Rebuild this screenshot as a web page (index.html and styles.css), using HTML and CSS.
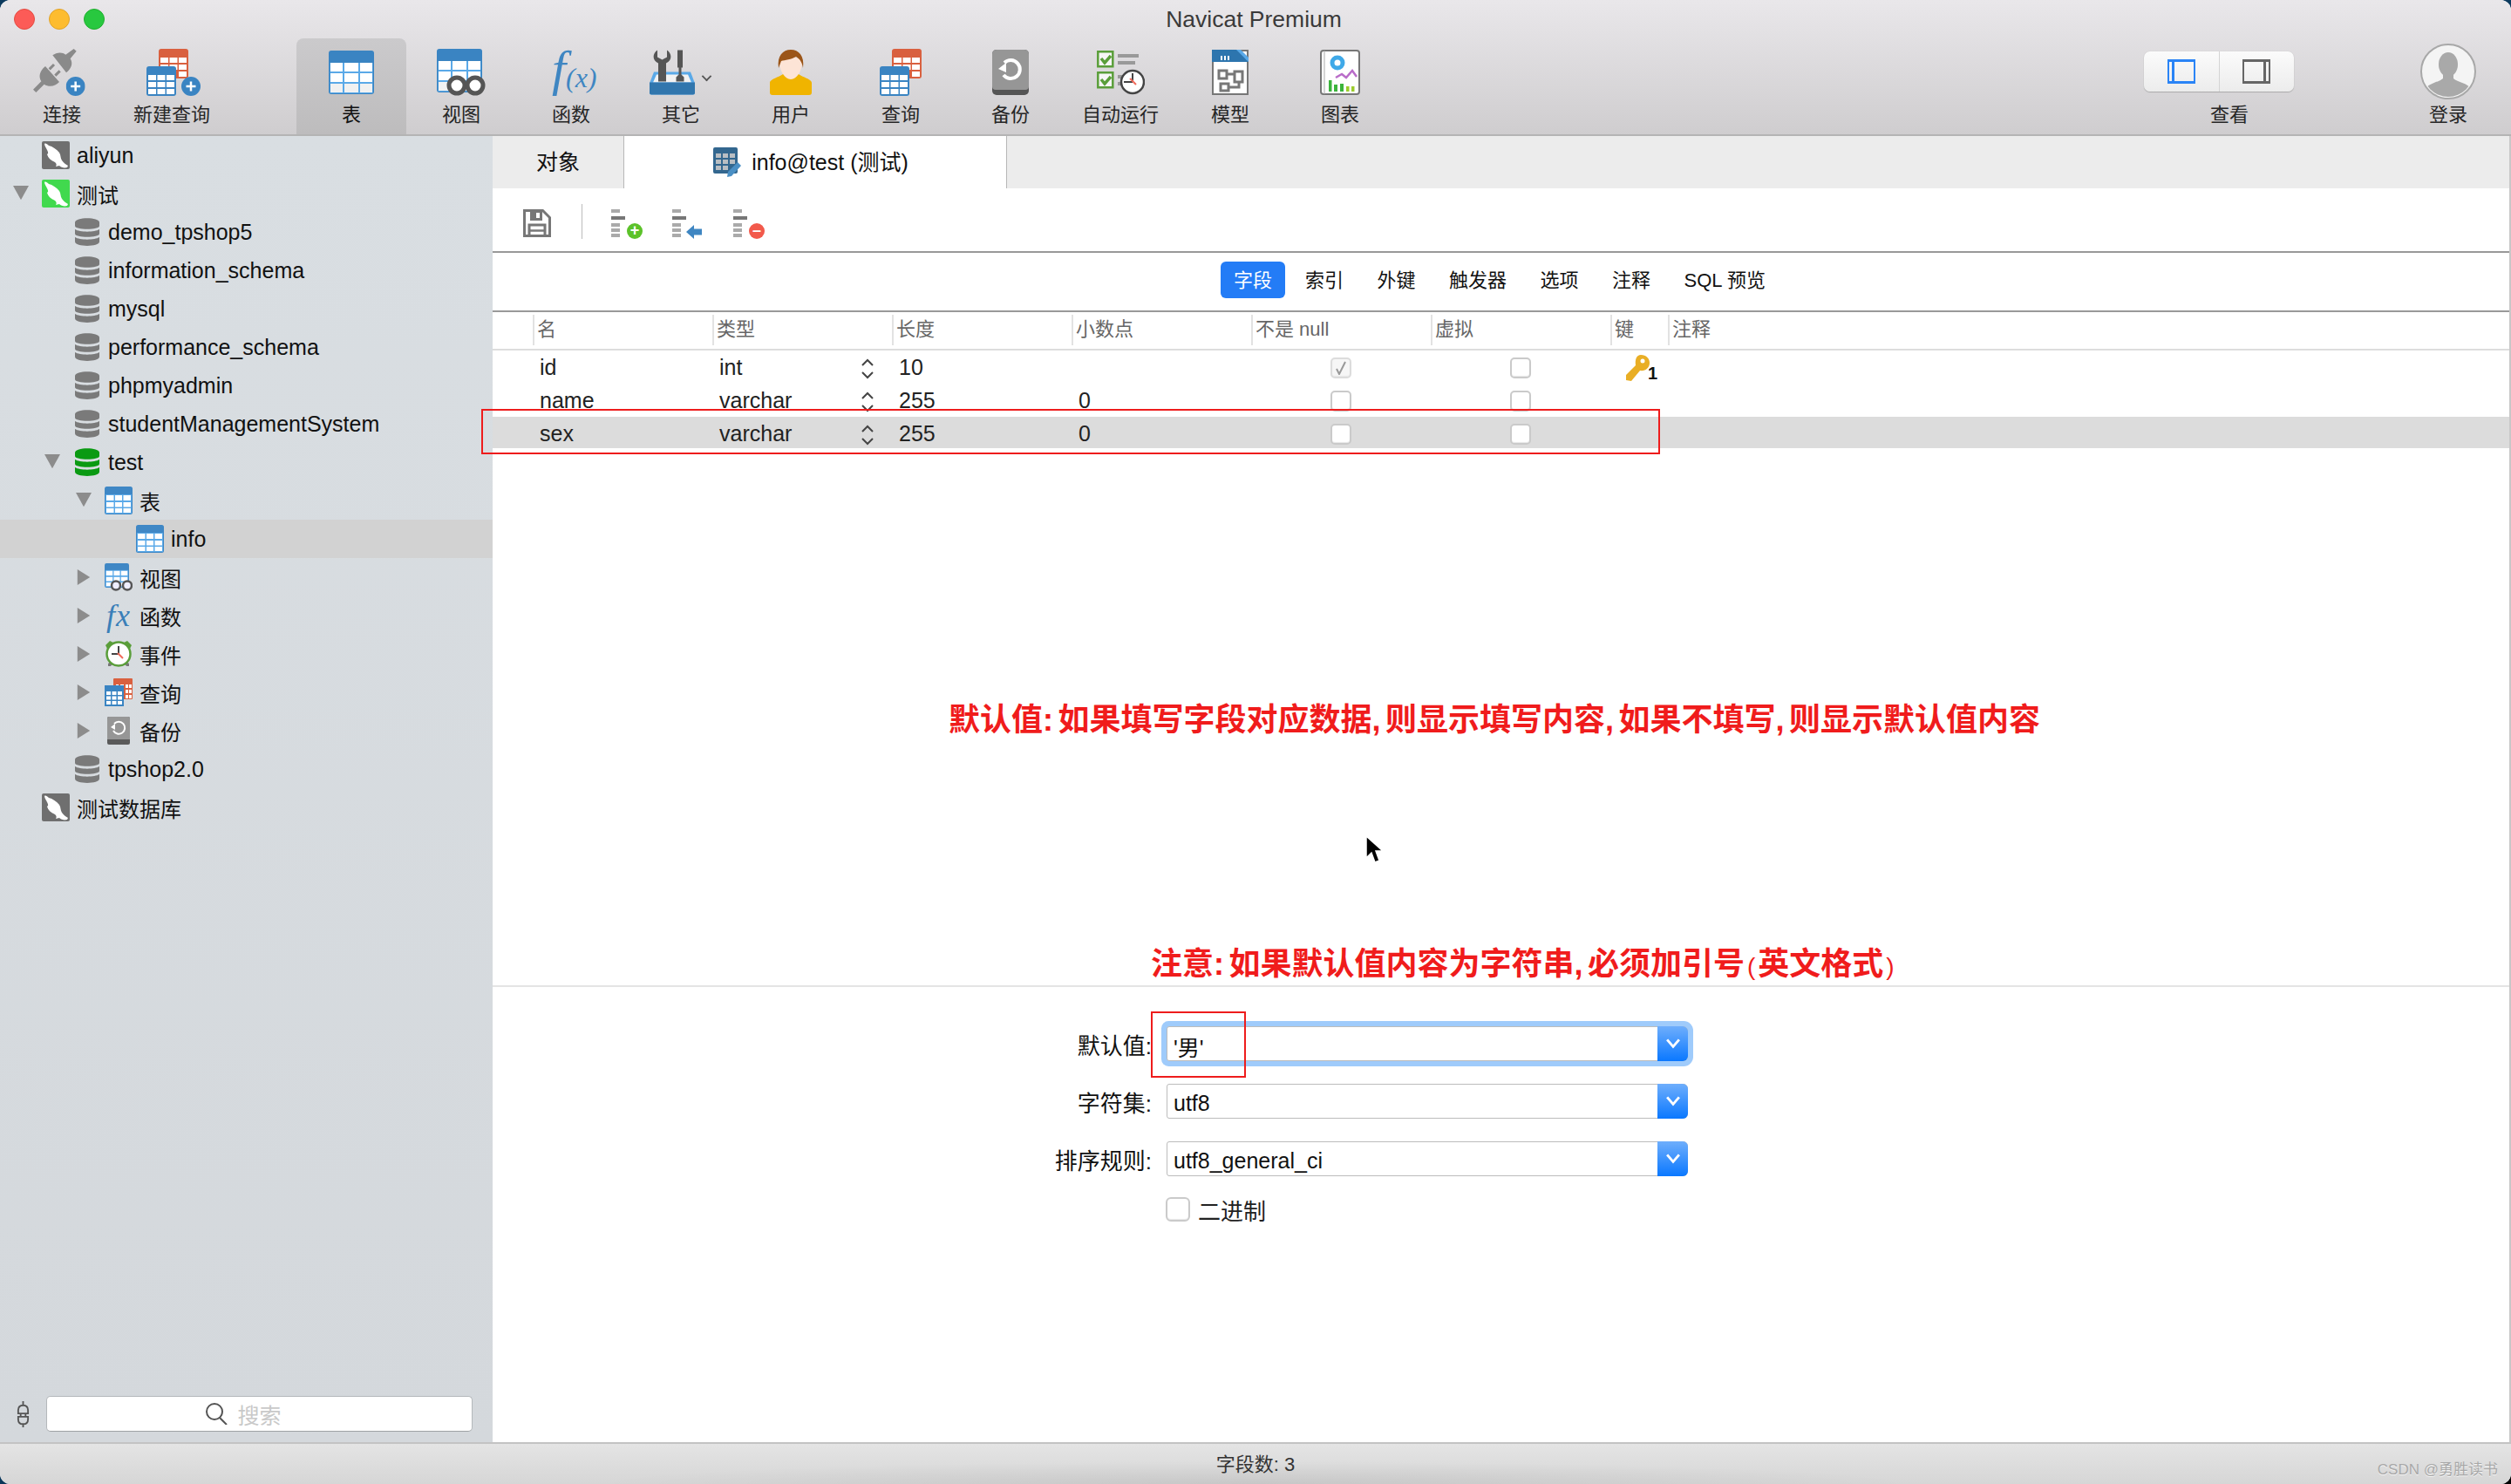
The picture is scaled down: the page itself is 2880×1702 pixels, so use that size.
FILE: index.html
```html
<!DOCTYPE html>
<html lang="zh-CN">
<head>
<meta charset="utf-8">
<title>Navicat Premium</title>
<link rel="stylesheet" href="styles.css">
</head>
<body>
<svg class="sprite" xmlns="http://www.w3.org/2000/svg">
  <symbol id="i-table" viewBox="0 0 52 50">
    <rect width="52" height="50" rx="3" fill="#3a84c2"/>
    <rect x="1.5" y="14" width="49" height="35" fill="#5aa9e8"/>
    <path fill="#fff" d="M2 14h14v10H2zM18 14h16v10H18zM36 14h14v10H36zM2 26h14v10H2zM18 26h16v10H18zM36 26h14v10H36z"/>
    <path fill="#f1f1f1" d="M2 38h14v10H2zM18 38h16v10H18zM36 38h14v10H36z"/>
  </symbol>
  <symbol id="i-tbl" viewBox="0 0 32 32">
    <rect width="32" height="32" rx="2.5" fill="#3f87c5"/>
    <rect x="1" y="9" width="30" height="22" fill="#5aa9e8"/>
    <path fill="#fff" d="M2 10h8.500v6H2zM12 10h8v6h-8zM21.500 10H30v6h-8.500zM2 18h8.500v5.500H2zM12 18h8v5.500h-8zM21.500 18H30v5.500h-8.500zM2 25h8.500v5H2zM12 25h8v5h-8zM21.500 25H30v5h-8.500z"/>
  </symbol>
  <symbol id="i-q" viewBox="0 0 48 54">
    <rect x="14" width="34" height="34" rx="3" fill="#d9603f"/>
    <path fill="#fff" d="M16 10h9v6h-9zM26.500 10h9v6h-9zM37 10h9v6h-9zM16 18h9v6h-9zM26.500 18h9v6h-9zM37 18h9v6h-9zM37 26h9v6h-9z"/>
    <rect y="20" width="34" height="34" rx="3" fill="#3a84c2"/>
    <path fill="#fff" d="M2 30h9v6H2zM12.500 30h9v6h-9zM23 30h9v6h-9zM2 38h9v6H2zM12.500 38h9v6h-9zM23 38h9v6h-9zM2 46h9v6H2zM12.500 46h9v6h-9zM23 46h9v6h-9z"/>
  </symbol>
  <symbol id="i-plus" viewBox="0 0 22 22">
    <circle cx="11" cy="11" r="11" fill="#3a84c2"/>
    <path d="M11 5.500v11M5.500 11h11" stroke="#fff" stroke-width="2.500"/>
  </symbol>
  <symbol id="i-plug" viewBox="0 0 180 162">
    <path fill="#8a8a8a" d="M67 22C80 12 100 10 112 20L140 0l9 8-21 26c10 16 4 34-14 48z"/>
    <path fill="#8a8a8a" d="M42 60l48 54c-14 16-36 18-52 8L10 150 0 140l28-28C18 96 22 76 42 60z"/>
    <path stroke="#8a8a8a" stroke-width="9" d="M56 70l16-16M76 92l16-16"/>
    <use href="#i-plus" x="113" y="96" width="66" height="66"/>
  </symbol>
  <symbol id="i-view" viewBox="0 0 56 54">
    <use href="#i-table" width="52" height="50"/>
    <circle cx="23" cy="42" r="9" fill="#fff" stroke="#555" stroke-width="5"/>
    <circle cx="44" cy="42" r="9" fill="#fff" stroke="#555" stroke-width="5"/>
    <path d="M31 40h5" stroke="#555" stroke-width="4"/>
  </symbol>
  <symbol id="i-tools" viewBox="0 0 52 51">
    <path fill="#5aa9e8" d="M5 25h42l5 13v11q0 2-2 2H2q-2 0-2-2V38z"/>
    <path fill="#f2f2f2" d="M8 28h36l4 9H4z"/>
    <path fill="#3176ad" d="M0 37h52v12q0 2-2 2H2q-2 0-2-2z"/>
    <path fill="#555" d="M9 0C3 4 3 12 10 15v21h9V15c7-3 7-11 1-15v8l-5.500 3L9 8z"/>
    <path fill="#555" d="M32 0h6v20h-1.500v8l3 3v5h-9v-5l3-3v-8H32z"/>
  </symbol>
  <symbol id="i-user" viewBox="0 0 48 52">
    <path fill="#f0b400" d="M0 49V38c0-5 14-7 17-12h14c3 5 17 7 17 12v11q0 3-3 3H3q-3 0-3-3z"/>
    <path fill="#fde4d6" d="M11 14c0-7 26-7 26 0 0 10-6 20-13 20S11 24 11 14z"/>
    <path fill="#9b5518" d="M10 21C8 7 15 0 24 0s16 7 14 21c-1-6-3-10-8-13-5 3-13 4-17 5z"/>
  </symbol>
  <symbol id="i-backup" viewBox="0 0 42 52">
    <rect width="42" height="52" rx="5" fill="#555"/>
    <path fill="#969696" d="M5 0h32q5 0 5 5v37q0 4-4 4H4q-4 0-4-4V5q0-5 5-5z"/>
    <path d="M14 15a10.500 10.500 0 1 1-1 14" fill="none" stroke="#fff" stroke-width="4"/>
    <path fill="#fff" d="M7 22l9-7v11z"/>
  </symbol>
  <symbol id="i-auto" viewBox="0 0 55 50">
    <path fill="#f6f6f6" stroke="#5a9e3a" stroke-width="2.500" d="M1.300 1.300h17v17h-17zM1.300 25.300h17v17h-17z"/>
    <path fill="none" stroke="#5a9e3a" stroke-width="3.500" d="M5 9l4 5 7-8M5 33l4 5 7-8"/>
    <path fill="#999" d="M24 4h24v4H24zM24 12h20v4H24zM24 28h6v4h-6zM24 36h6v4h-6z"/>
    <circle cx="41" cy="36" r="13" fill="#fff" stroke="#444" stroke-width="2.500"/>
    <path d="M41 36V26M41 36H31" stroke="#444" stroke-width="2"/>
    <path d="M38 32l7 7" stroke="#f06a5a" stroke-width="2"/>
  </symbol>
  <symbol id="i-model" viewBox="0 0 42 52">
    <path fill="#fff" stroke="#777" stroke-width="2" d="M1 1h40v50H1z"/>
    <path fill="#2d75ae" d="M0 0h30l12 14H0z"/>
    <path fill="#5aa9e8" d="M28 0l14 14V9l-9-9z"/>
    <path fill="#fff" d="M10 7h2v5h-2zM14 7h2v5h-2zM18 7h2v5h-2z"/>
    <path fill="none" stroke="#777" stroke-width="3" d="M8 24h9v9H8zM26 25h9v12h-9zM10 39h9v8h-9zM17 28h9M31 37v6H19"/>
  </symbol>
  <symbol id="i-chart" viewBox="0 0 46 52">
    <rect x="1" y="1" width="44" height="50" rx="3" fill="#fff" stroke="#777" stroke-width="2"/>
    <path d="M5 1v50" stroke="#aaa"/>
    <circle cx="20" cy="15" r="6" fill="none" stroke="#3fa9e8" stroke-width="5"/>
    <path d="M18 32l7-4 5 4 7-8 5 7" fill="none" stroke="#b96cc9" stroke-width="2.500"/>
    <path fill="#3cb43c" d="M10 35h3.500v13H10zM16 40h4v8h-4zM23 39h4v9h-4z"/>
    <path fill="#9ccc2c" d="M30 42h3.500v6H30zM36 42h3.500v6H36z"/>
  </symbol>
  <symbol id="i-conn" viewBox="0 0 32 32">
    <rect width="32" height="32" rx="2"/>
    <path fill="#fff" d="M3 3c1-1 3 0 5 2 4 1 9 4 12 8 2 3 1 6 3 9 2 3 5 5 7 6l-1 2c-3 1-7 0-9-2l-4 1c1-2 1-3-1-5-5-2-8-5-9-9 2-1 1-3 0-5C5 8 3 5 3 3z"/>
  </symbol>
  <symbol id="i-db" viewBox="0 0 28 32">
    <path d="M0 5c0-6.500 28-6.500 28 0v4c0 5-28 5-28 0z"/>
    <path d="M0 13c5 3.500 23 3.500 28 0v5c0 5-28 5-28 0z"/>
    <path d="M0 22c5 3.500 23 3.500 28 0v5c0 6.500-28 6.500-28 0z"/>
  </symbol>
  <symbol id="i-tview" viewBox="0 0 32 32">
    <use href="#i-tbl" width="28" height="28"/>
    <circle cx="13" cy="25.500" r="5" fill="#eef" stroke="#555" stroke-width="2.500"/>
    <circle cx="26" cy="25.500" r="5" fill="#eef" stroke="#555" stroke-width="2.500"/>
  </symbol>
  <symbol id="i-clock" viewBox="0 0 32 32">
    <path fill="#5a9e3a" d="M1 6l5-5 4 2-7 7zM31 6l-5-5-4 2 7 7z"/>
    <path fill="#777" d="M4 27l3-2 2 2-2 3H4zM28 27l-3-2-2 2 2 3h3z"/>
    <circle cx="16" cy="16" r="13.500" fill="#fff" stroke="#5a9e3a" stroke-width="2.500"/>
    <path d="M16 7v9H8" stroke="#444" stroke-width="2" fill="none"/>
    <path d="M15 15l6 6" stroke="#f06a5a" stroke-width="2"/>
  </symbol>
  <symbol id="i-tq" viewBox="0 0 32 32">
    <rect x="10" width="22" height="24" rx="1" fill="#d9603f"/>
    <path fill="#fff" d="M24 7h3v4h-3zM28 7h3v4h-3zM24 13h3v4h-3zM28 13h3v4h-3zM24 19h3v4h-3zM28 19h3v4h-3zM13 7h3v1h-3zM18 7h4v1h-4z"/>
    <rect y="8" width="22" height="24" fill="#3a84c2"/>
    <path fill="#fff" d="M2 15h5v4H2zM8.500 15h5v4h-5zM15 15h5v4h-5zM2 20.500h5v4H2zM8.500 20.500h5v4h-5zM15 20.500h5v4h-5zM2 26h5v4H2zM8.500 26h5v4h-5zM15 26h5v4h-5z"/>
  </symbol>
  <symbol id="i-tb" viewBox="0 0 32 32">
    <rect x="3" width="26" height="32" rx="2" fill="#5a5a5a"/>
    <path fill="#969696" d="M5 0h22q2 0 2 2v24H3V2q0-2 2-2z"/>
    <path d="M11 8a7 7 0 1 1-1 8" fill="none" stroke="#fff" stroke-width="2"/>
    <path fill="#fff" d="M7 12l5-4v7z"/>
  </symbol>
  <symbol id="i-tabedit" viewBox="0 0 32 34">
    <rect width="28" height="30" rx="2" fill="#33678f"/>
    <path fill="#b9bec3" d="M3 7h6v5H3zM11 7h6v5h-6zM19 7h6v5h-6zM3 14h6v5H3zM11 14h6v5h-6zM19 14h6v5h-6zM3 21h6v5H3zM11 21h6v5h-6z"/>
    <path fill="#4a8fc4" d="M28 17l4 4-11 12-5 1 1-6z"/>
  </symbol>
  <symbol id="i-save" viewBox="0 0 32 32">
    <path fill="none" stroke="#777" stroke-width="3" d="M1.500 1.500h21l8 8v21h-29z"/>
    <path fill="#777" d="M8 2h14v11H8z"/>
    <path fill="#fff" d="M15 4h4v6h-4z"/>
    <path fill="none" stroke="#777" stroke-width="3" d="M7 18h18v12.500H7z"/>
    <path stroke="#777" stroke-width="2.500" d="M8 24.500h16"/>
  </symbol>
  <symbol id="i-fields" viewBox="0 0 36 34">
    <path fill="#aaa" d="M0 0h10v4H0zM0 16h10v4H0zM0 22h10v4H0zM0 28h10v4H0z"/>
    <path fill="#777" d="M0 8h16v4H0z"/>
  </symbol>
  <symbol id="i-key" viewBox="0 0 28 30">
    <path fill="#e9ae25" d="M17 0c6 0 10 4 10 9 0 6-5 10-11 9L6 30l-6-1v-6l11-11c-1-7 1-12 6-12z"/>
    <circle cx="19" cy="7" r="2.500" fill="#fff"/>
  </symbol>
  <symbol id="i-stepper" viewBox="0 0 14 24">
    <path fill="none" stroke="#444" stroke-width="2" d="M1 8l6-6 6 6M1 16l6 6 6-6"/>
  </symbol>
  <symbol id="i-chev" viewBox="0 0 14 10">
    <path fill="none" stroke="#fff" stroke-width="2.500" d="M1 1l6 7 6-7"/>
  </symbol>
</svg>

<div class="window">
  <header class="chrome">
    <div class="titlebar">
      <div class="lights"><i class="light red"></i><i class="light yellow"></i><i class="light green"></i></div>
      <div class="title">Navicat Premium</div>
      <div></div>
    </div>
    <nav class="toolbar">
      <div class="tool"><svg class="ti w60 nudge-plug"><use href="#i-plug"/></svg><span>连接</span></div>
      <div class="tool"><span class="ti-wrap nudge-new"><svg class="ti w48"><use href="#i-q"/></svg><svg class="plus"><use href="#i-plus"/></svg></span><span>新建查询</span></div>
      <div class="tool first active"><svg class="ti w52"><use href="#i-table"/></svg><span>表</span></div>
      <div class="tool"><svg class="ti w56"><use href="#i-view"/></svg><span>视图</span></div>
      <div class="tool"><svg class="ti w60 fxicon"><text class="fx-f" x="8" y="42">f</text><text class="fx-x" x="24" y="44">(x)</text></svg><span>函数</span></div>
      <div class="tool"><span class="ti-wrap nudge-tools"><svg class="ti w52"><use href="#i-tools"/></svg><b class="caret"></b></span><span>其它</span></div>
      <div class="tool"><svg class="ti w48"><use href="#i-user"/></svg><span>用户</span></div>
      <div class="tool"><svg class="ti w48"><use href="#i-q"/></svg><span>查询</span></div>
      <div class="tool"><svg class="ti w42"><use href="#i-backup"/></svg><span>备份</span></div>
      <div class="tool"><svg class="ti w55"><use href="#i-auto"/></svg><span>自动运行</span></div>
      <div class="tool"><svg class="ti w42"><use href="#i-model"/></svg><span>模型</span></div>
      <div class="tool"><svg class="ti w46"><use href="#i-chart"/></svg><span>图表</span></div>
      <div class="tool view">
        <div class="segment"><div class="seg seg-on"><i class="pane pane-l"></i></div><div class="seg"><i class="pane pane-r"></i></div></div>
        <span>查看</span>
      </div>
      <div class="tool login">
        <svg class="avatar" viewBox="0 0 64 64"><defs><clipPath id="avc"><circle cx="32" cy="32" r="29"/></clipPath></defs><circle cx="32" cy="32" r="31" fill="#f4f4f4" stroke="#a8a8a8" stroke-width="2"/><g clip-path="url(#avc)" fill="#a9a9a9"><ellipse cx="32" cy="24" rx="11" ry="14"/><path d="M26 34h12v6c4 4 18 6 20 12v12H6V52c2-6 16-8 20-12z"/></g></svg>
        <span>登录</span>
      </div>
    </nav>
  </header>

  <div class="body">
    <aside class="sidebar">
      <div class="tree">
        <div class="row d0 en"><b class="tri none"></b><svg class="ic conn-gray"><use href="#i-conn"/></svg><span>aliyun</span></div>
        <div class="row d0"><b class="tri down"></b><svg class="ic conn-green"><use href="#i-conn"/></svg><span>测试</span></div>
        <div class="row d1 en"><b class="tri none"></b><svg class="ic db"><use href="#i-db"/></svg><span>demo_tpshop5</span></div>
        <div class="row d1 en"><b class="tri none"></b><svg class="ic db"><use href="#i-db"/></svg><span>information_schema</span></div>
        <div class="row d1 en"><b class="tri none"></b><svg class="ic db"><use href="#i-db"/></svg><span>mysql</span></div>
        <div class="row d1 en"><b class="tri none"></b><svg class="ic db"><use href="#i-db"/></svg><span>performance_schema</span></div>
        <div class="row d1 en"><b class="tri none"></b><svg class="ic db"><use href="#i-db"/></svg><span>phpmyadmin</span></div>
        <div class="row d1 en"><b class="tri none"></b><svg class="ic db"><use href="#i-db"/></svg><span>studentManagementSystem</span></div>
        <div class="row d1 en"><b class="tri down"></b><svg class="ic db on"><use href="#i-db"/></svg><span>test</span></div>
        <div class="row d2"><b class="tri down"></b><svg class="ic"><use href="#i-tbl"/></svg><span>表</span></div>
        <div class="row d3 en selected"><b class="tri none"></b><svg class="ic"><use href="#i-tbl"/></svg><span>info</span></div>
        <div class="row d2"><b class="tri right"></b><svg class="ic"><use href="#i-tview"/></svg><span>视图</span></div>
        <div class="row d2"><b class="tri right"></b><em class="ic fx">fx</em><span>函数</span></div>
        <div class="row d2"><b class="tri right"></b><svg class="ic"><use href="#i-clock"/></svg><span>事件</span></div>
        <div class="row d2"><b class="tri right"></b><svg class="ic"><use href="#i-tq"/></svg><span>查询</span></div>
        <div class="row d2"><b class="tri right"></b><svg class="ic"><use href="#i-tb"/></svg><span>备份</span></div>
        <div class="row d1 en"><b class="tri none"></b><svg class="ic db"><use href="#i-db"/></svg><span>tpshop2.0</span></div>
        <div class="row d0"><b class="tri none"></b><svg class="ic conn-gray"><use href="#i-conn"/></svg><span>测试数据库</span></div>
      </div>
      <div class="searchrow">
        <svg class="plugmini" viewBox="0 0 16 32"><path fill="none" stroke="#555" stroke-width="2" d="M8 0v5M2 15V11q0-6 6-6t6 6v4zM2 19h12v3q0 6-6 6t-6-6zM5 16v3M11 16v3M8 28v4"/></svg>
        <div class="search">
          <svg class="glass" viewBox="0 0 25 25"><circle cx="10" cy="10" r="9" fill="none" stroke="#555" stroke-width="2"/><path d="M16 17l8 8" stroke="#555" stroke-width="2"/></svg>
          <span>搜索</span>
        </div>
      </div>
    </aside>

    <main class="main">
      <div class="tabs">
        <div class="tab">对象</div>
        <div class="tab tab-on"><svg class="tabicon"><use href="#i-tabedit"/></svg><span>info@test (测试)</span></div>
      </div>
      <div class="subbar">
        <svg class="save"><use href="#i-save"/></svg>
        <i class="subsep"></i>
        <span class="fbtn"><svg class="fi"><use href="#i-fields"/></svg><i class="badge add">+</i></span>
        <span class="fbtn"><svg class="fi"><use href="#i-fields"/></svg><i class="arrowb"></i></span>
        <span class="fbtn"><svg class="fi"><use href="#i-fields"/></svg><i class="badge del">–</i></span>
      </div>
      <div class="ftabs">
        <span class="ftab ftab-on">字段</span><span class="ftab">索引</span><span class="ftab">外键</span><span class="ftab">触发器</span><span class="ftab">选项</span><span class="ftab">注释</span><span class="ftab">SQL 预览</span>
      </div>
      <div class="grid ghead">
        <div></div><div class="hc">名</div><div class="hc">类型</div><div class="hc">长度</div><div class="hc">小数点</div><div class="hc">不是 null</div><div class="hc">虚拟</div><div class="hc">键</div><div class="hc">注释</div>
      </div>
      <div class="rows">
        <div class="grid grow">
          <div></div><div class="c">id</div><div class="c ctype">int<svg class="step"><use href="#i-stepper"/></svg></div><div class="c">10</div><div class="c"></div>
          <div class="c cc"><i class="chk chk-on"><svg viewBox="0 0 14 16"><path d="M2 9l3 6 7-14" fill="none" stroke="#999" stroke-width="2"/></svg></i></div><div class="c cc"><i class="chk"></i></div>
          <div class="c ckey"><svg class="key"><use href="#i-key"/></svg><b>1</b></div><div></div>
        </div>
        <div class="grid grow">
          <div></div><div class="c">name</div><div class="c ctype">varchar<svg class="step"><use href="#i-stepper"/></svg></div><div class="c">255</div><div class="c">0</div>
          <div class="c cc"><i class="chk"></i></div><div class="c cc"><i class="chk"></i></div><div></div><div></div>
        </div>
        <div class="grid grow gsel">
          <div></div><div class="c">sex</div><div class="c ctype">varchar<svg class="step"><use href="#i-stepper"/></svg></div><div class="c">255</div><div class="c">0</div>
          <div class="c cc"><i class="chk"></i></div><div class="c cc"><i class="chk"></i></div><div></div><div></div>
        </div>
      </div>
      <section class="form">
        <div class="frow"><label>默认值:</label><div class="combo focus"><span>'男'</span><i class="cbtn"><svg><use href="#i-chev"/></svg></i></div></div>
        <div class="frow"><label>字符集:</label><div class="combo"><span>utf8</span><i class="cbtn"><svg><use href="#i-chev"/></svg></i></div></div>
        <div class="frow"><label>排序规则:</label><div class="combo"><span>utf8_general_ci</span><i class="cbtn"><svg><use href="#i-chev"/></svg></i></div></div>
        <div class="frow fcheck"><label></label><i class="chk big"></i><span>二进制</span></div>
      </section>

      <div class="note note1">默认值: 如果填写字段对应数据, 则显示填写内容, 如果不填写, 则显示默认值内容</div>
      <div class="note note2">注意: 如果默认值内容为字符串, 必须加引号<small>(</small>英文格式<small>)</small></div>
      <i class="redbox box-row"></i>
      <i class="redbox box-val"></i>
      <svg class="cursor" viewBox="0 0 20 34"><path d="M1 1v25l6-6 4 11 5-2-4-11h8z" fill="#000" stroke="#fff" stroke-width="1.500"/></svg>
    </main>
  </div>

  <footer class="status">
    <span>字段数: 3</span>
    <span class="mark">CSDN @勇胜读书</span>
  </footer>
</div>
</body>
</html>
```

FILE: styles.css
```css
* { box-sizing: border-box; }
html, body { margin: 0; height: 100%; }
body {
  background: linear-gradient(160deg, #0c3a5e 0%, #0c3a5e 60%, #000 100%);
  font-family: "Liberation Sans", "Noto Sans CJK SC", sans-serif;
  font-size: 24px;
  color: #111;
  overflow: hidden;
}
.sprite { display: none; }
i, em, b { font-style: normal; }

.window {
  width: 2880px;
  height: 1702px;
  display: flex;
  flex-direction: column;
  border-radius: 12px;
  overflow: hidden;
  background: #fff;
}

/* Title + toolbar */
.chrome {
  height: 156px;
  flex: none;
  background: linear-gradient(#e9e7ea, #cfcdcf);
  border-bottom: 2px solid #b4b4b4;
}
.titlebar {
  height: 44px;
  display: grid;
  grid-template-columns: 1fr auto 1fr;
  align-items: center;
}
.lights { display: flex; gap: 16px; padding-left: 16px; }
.light { width: 24px; height: 24px; border-radius: 50%; }
.red { background: #fc5b57; border: 1px solid #e24b41; }
.yellow { background: #fdbc2f; border: 1px solid #e0a32a; }
.green { background: #28c83f; border: 1px solid #1fae2e; }
.title { font-size: 26.5px; color: #3a3a3a; margin-right: 4px; }

.toolbar { height: 110px; display: flex; padding-left: 8px; font-size: 22px; color: #262626; }
.tool {
  width: 126px;
  display: flex;
  flex-direction: column;
  align-items: center;
  padding-top: 12px;
}
.tool > span:last-child { margin-top: 9px; line-height: 26px; }
.tool.first { margin-left: 80px; }
.active {
  background: linear-gradient(#cbcacc, #bdbcbd);
  border-radius: 8px 8px 0 0;
  color: #111;
}
.ti { height: 54px; display: block; flex: none; }
.w42 { width: 42px; } .w46 { width: 46px; } .w48 { width: 48px; } .w52 { width: 52px; }
.w55 { width: 55px; } .w56 { width: 56px; } .w60 { width: 60px; }
.ti-wrap { position: relative; height: 54px; display: block; margin-top: 0; }
.nudge-plug { margin-right: 6px; }
.nudge-new { margin-right: 10px; }
.nudge-tools { margin-right: 20px; }
.fxicon { overflow: visible; }
.plus { position: absolute; left: 40px; top: 32px; width: 22px; height: 22px; }
.caret {
  position: absolute; left: 61px; top: 27px;
  width: 9px; height: 9px;
  border-right: 2.5px solid #555; border-bottom: 2.5px solid #555;
  transform: rotate(45deg) scale(.9);
}
.fx-f { font: italic 58px "Liberation Serif", serif; fill: #3f86c2; }
.fx-x { font: italic 32px "Liberation Serif", serif; fill: #3f86c2; }

.view { margin-left: auto; margin-right: 125px; }
.segment {
  width: 172px; height: 46px; margin: 3px 24px 5px 0;
  flex: none;
  display: flex;
  background: linear-gradient(#fbfbfb, #ececec);
  border-radius: 7px;
  box-shadow: 0 1px 1px #aaa, 0 0 1px #bbb;
}
.seg { flex: 1; display: flex; align-items: center; justify-content: center; }
.seg-on { border-right: 1px solid #d4d4d4; }
.pane { width: 32px; height: 28px; border: 2px solid #666; display: block; border-top-width: 3px; border-bottom-width: 3px; }
.pane-l { border-color: #2a84f6; background: linear-gradient(to right, transparent 3px, #2a84f6 3px, #2a84f6 6px, transparent 6px); }
.pane-r { background: linear-gradient(to left, transparent 3px, #666 3px, #666 6px, transparent 6px); }
.login { margin-right: 9px; }
.avatar { width: 64px; height: 64px; margin-top: -6px; margin-bottom: -4px; }

/* Body */
.body { flex: 1; display: flex; min-height: 0; }
.sidebar {
  width: 565px; flex: none;
  display: flex; flex-direction: column;
  background: linear-gradient(#d9dee2, #d4d8dc);
}
.tree { flex: 1; }
.row { height: 44px; display: flex; align-items: center; color: #111; }
.en span { font-size: 25px; padding-top: 1px; }
.d0 { padding-left: 15px; } .d1 { padding-left: 51px; } .d2 { padding-left: 87px; } .d3 { padding-left: 123px; }
.selected { background: #d2d2d2; }
.tri { width: 18px; height: 18px; margin-right: 15px; flex: none; }
.down { background: #8c8c8c; clip-path: polygon(0 0, 100% 0, 50% 90%); }
.right { background: #8c8c8c; clip-path: polygon(10% 0, 90% 50%, 10% 100%); }
.ic { width: 32px; height: 32px; flex: none; margin-right: 8px; }
.conn-gray { fill: #6f6f6f; }
.conn-green { fill: #41d94e; }
.db { width: 28px; margin: 0 10px 0 2px; fill: #7a7a7a; }
.db.on { fill: #0a9a12; }
.fx {
  font: italic 36px/32px "Liberation Serif", serif;
  color: #3a7fb8;
  text-align: center;
  letter-spacing: 1px;
}
.searchrow { height: 53px; flex: none; display: flex; padding: 0 23px 12px 19px; align-items: center; }
.plugmini { width: 15px; height: 32px; margin-right: 19px; flex: none; }
.search {
  flex: 1; height: 41px;
  display: flex; align-items: center; justify-content: center; gap: 11px;
  padding-right: 36px;
  background: #fff;
  border: 1px solid #b4b8bb;
  border-bottom-color: #9ea2a5;
  border-radius: 5px;
  font-size: 25px;
  color: #c9c9c9;
}
.glass { width: 25px; height: 25px; }

/* Main */
.main { flex: 1; min-width: 0; position: relative; display: flex; flex-direction: column; border-right: 2px solid #c8c8c8; }
.tabs { height: 60px; flex: none; display: flex; background: #ececec; }
.tab { width: 151px; display: flex; align-items: center; justify-content: center; gap: 12px; padding-bottom: 4px; border-right: 1px solid #b8b8b8; font-size: 25px; }
.tab-on { width: 439px; background: #fff; padding-right: 10px; }
.tabicon { width: 32px; height: 34px; margin-top: 4px; }
.subbar { height: 74px; flex: none; display: flex; align-items: flex-start; padding: 24px 0 0 35px; border-bottom: 2px solid #999; }
.save { width: 32px; height: 32px; }
.subsep { width: 1px; height: 40px; background: #bbb; margin: -6px 33px 0 35px; }
.fbtn { position: relative; width: 36px; height: 34px; margin-right: 34px; display: block; }
.fi { width: 36px; height: 34px; display: block; }
.badge {
  position: absolute; left: 18px; top: 16px;
  width: 18px; height: 18px; border-radius: 50%;
  color: #fff; font: bold 18px/17px "Liberation Sans", sans-serif; text-align: center;
}
.add { background: #5cc22a; }
.del { background: #f2594b; }
.arrowb {
  position: absolute; left: 16px; top: 18px;
  width: 18px; height: 16px;
  background: #3f86c2;
  clip-path: polygon(0 50%, 50% 0, 50% 28%, 100% 28%, 100% 72%, 50% 72%, 50% 100%);
}
.ftabs { height: 68px; flex: none; display: flex; align-items: flex-start; gap: 38.5px; padding: 10px 0 0 835px; border-bottom: 2px solid #999; font-size: 22px; }
.ftab { height: 42px; line-height: 44px; color: #111; }
.ftab-on { width: 74px; margin-right: -15.5px; text-align: center; background: #237cf6; color: #fff; border-radius: 6px; }

.grid { display: grid; grid-template-columns: 46px repeat(6, 206px) 66px 1fr; }
.ghead { height: 44px; flex: none; border-bottom: 2px solid #ddd; font-size: 22px; color: #666; }
.hc { height: 35px; margin-top: 3px; line-height: 33px; padding-left: 3px; border-left: 2px solid #e2e2e2; }
.rows { flex: 1; min-height: 0; }
.grow { height: 38px; font-size: 25px; color: #222; }
.gsel { height: 36px; background: #dcdcdc; }
.c { display: flex; align-items: center; padding-left: 8px; padding-top: 1px; white-space: nowrap; }
.gsel .c { padding-top: 3px; }
.ctype { justify-content: space-between; padding-right: 21px; }
.step { width: 14px; height: 24px; flex: none; margin-top: 3px; }
.cc { justify-content: center; padding-left: 0; padding-right: 0; }
.ckey { position: relative; padding-left: 18px; }
.key { width: 28px; height: 30px; }
.ckey b { position: absolute; left: 43px; top: 16px; font-size: 20px; line-height: 20px; color: #111; }
.chk { width: 24px; height: 24px; display: block; background: #fff; border: 2px solid #cacaca; border-radius: 5px; box-shadow: inset 0 -1px 1px #e8e8e8; flex: none; }
.chk svg { width: 14px; height: 16px; display: block; margin: 2px auto; }
.chk-on { background: #f6f6f6; border-color: #dcdcdc; }

/* Form */
.form { height: 524px; flex: none; border-top: 2px solid #e4e4e4; padding-top: 45px; font-size: 25px; }
.frow { display: flex; align-items: center; height: 40px; margin-bottom: 26px; }
.frow label { width: 756px; margin-right: 17px; text-align: right; flex: none; padding-top: 1px; font-size: 26px; }
.combo {
  position: relative;
  width: 598px; height: 40px; flex: none;
  display: flex; align-items: center;
  padding: 5px 0 0 7px;
  background: #fff;
  border: 1px solid #bcbcbc;
  border-radius: 3px 5px 5px 3px;
}
.focus { box-shadow: 0 0 0 6px #9fcbfb; }
.cbtn {
  position: absolute; right: -1px; top: -1px; bottom: -1px;
  width: 35px;
  display: flex; align-items: center; justify-content: center;
  background: linear-gradient(#6eaefc, #0a78ff);
  border-radius: 0 6px 6px 0;
}
.cbtn svg { width: 16px; height: 12px; }
.fcheck { height: 28px; margin-top: -2px; }
.fcheck label { margin-right: 16px; }
.big { width: 28px; height: 28px; border-radius: 6px; margin-right: 9px; }
.fcheck span { color: #222; font-size: 26px; }

/* Overlaid annotations */
.note { position: absolute; white-space: nowrap; font-size: 36px; line-height: 40px; font-weight: 700; color: #f01c1c; word-spacing: -4.5px; }
.note small { font-size: 28px; font-weight: 400; margin: 0 3px; }
.note1 { left: 523px; top: 650px; }
.note2 { left: 755px; top: 930px; }
.redbox { position: absolute; border: 2px solid #ee1c1c; }
.box-row { left: -13px; top: 313px; width: 1352px; height: 52px; }
.box-val { left: 755px; top: 1004px; width: 109px; height: 76px; }
.cursor { position: absolute; left: 1001px; top: 802px; width: 20px; height: 34px; }

/* Status */
.status {
  position: relative;
  height: 48px; flex: none;
  display: flex; align-items: center; justify-content: center;
  padding-bottom: 5px;
  font-size: 22px; color: #333;
  background: radial-gradient(ellipse 760px 26px at 50% 100%, rgba(0,0,0,.07), transparent), linear-gradient(#e4e4e4, #d6d6d6);
  border-top: 2px solid #c3c3c3;
}
.mark { position: absolute; right: 15px; top: 18px; font-size: 17px; line-height: 24px; color: #a8a8a8; text-shadow: 0 1px 0 #f4f4f4; }
```
